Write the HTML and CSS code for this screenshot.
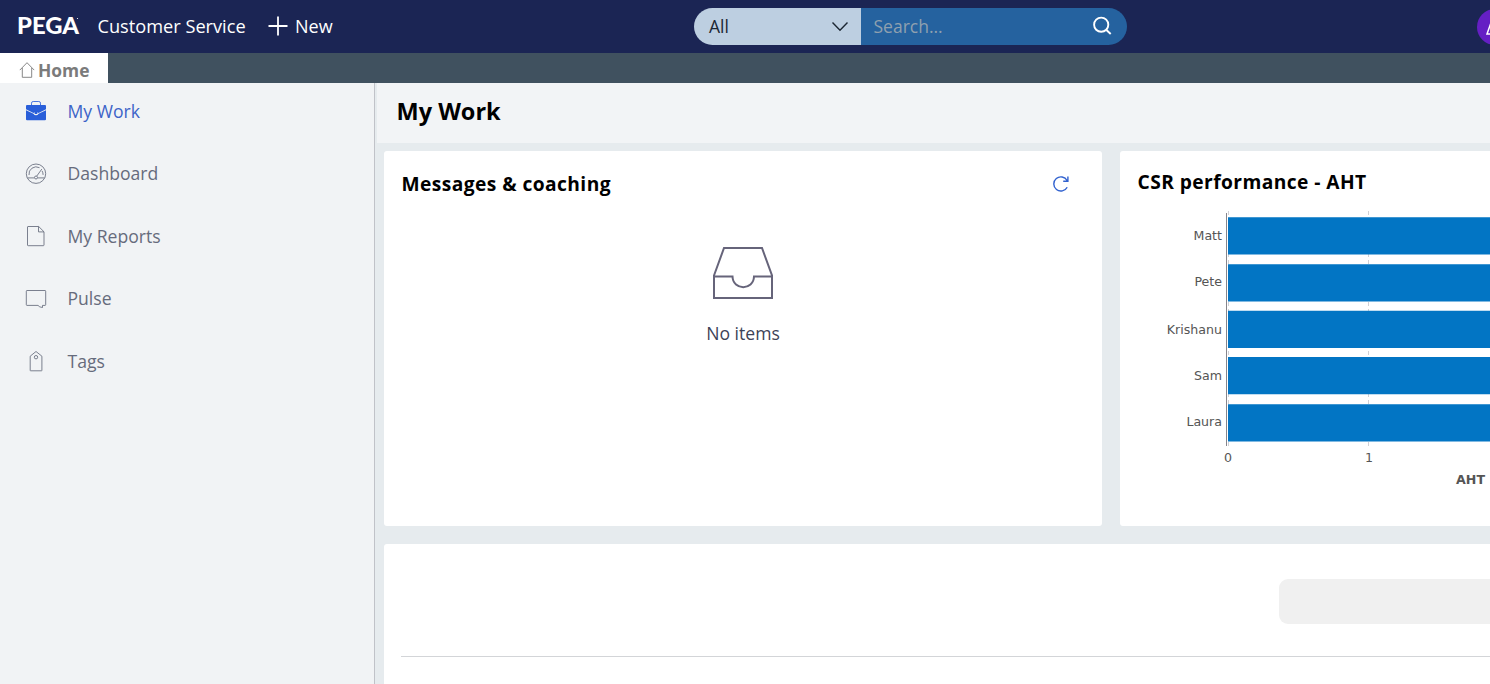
FILE: index.html
```html
<!DOCTYPE html>
<html lang="en">
<head>
<meta charset="utf-8">
<title>My Work</title>
<link rel="stylesheet" href="styles.css">
</head>
<body>
<header class="topbar">
  <svg class="logo" width="64" height="30" viewBox="0 0 64 30"><text x="-1" y="23" textLength="62" lengthAdjust="spacingAndGlyphs">PEGA</text><circle cx="59.500" cy="7.500" r=".6"/></svg>
  <span class="app-name">Customer Service</span>
  <button class="new-btn" type="button">
    <svg width="20" height="20" viewBox="0 0 20 20"><path d="M10 .5v19M.5 10h19"/></svg>
    <span>New</span>
  </button>
  <div class="search">
    <div class="scope"><span>All</span>
      <svg width="18" height="12" viewBox="0 0 18 12"><path d="M1.500 1.500 9 9.300l7.500-7.800"/></svg>
    </div>
    <div class="query"><span>Search...</span>
      <svg width="20" height="20" viewBox="0 0 20 20"><circle cx="9.200" cy="8.700" r="7.100"/><path d="m14.400 14 4.300 4"/></svg>
    </div>
  </div>
  <div class="avatar"><svg width="36" height="36" viewBox="0 0 36 36"><path d="M15 11 10 25h5"/></svg></div>
</header>
<div class="tabs">
  <div class="tab">
    <svg width="16" height="17" viewBox="0 0 16 17"><path d="M.8 8.100 8 .7l7.200 7.400M3.300 6v9.300h9.400V6"/></svg>
    <span>Home</span>
  </div>
</div>
<div class="body">
  <nav class="side">
    <a class="item active"><svg width="22" height="22" viewBox="0 0 22 22"><path class="line" d="M6.500 5V3.200Q6.500 1.500 8.200 1.500h5.600q1.700 0 1.700 1.700V5"/><path class="solid" d="M1 6q0-1 1-1h18q1 0 1 1v3.300l-7.400 3.600Q13 12.200 11 12.200T8.400 12.900L1 9.300zM1 10.200l7.500 3.600q.8 1.500 2.500 1.500t2.500-1.500l7.500-3.600V19.300q0 1-1 1H2q-1 0-1-1z"/><path class="solid" d="M9.700 12h2.600v2H9.700z"/></svg><span>My Work</span></a>
    <a class="item"><svg width="22" height="22" viewBox="0 0 22 22"><circle cx="11" cy="11.700" r="9.700"/><path d="M2.300 15.900h7M12.700 15.900h7M4 13a7.200 7.200 0 0 1 10.500-7.300M17.100 8.900q1 1.800 1 4M11.800 14l5-6.900"/><circle cx="11" cy="15.500" r="1.500"/></svg><span>Dashboard</span></a>
    <a class="item"><svg width="22" height="22" viewBox="0 0 22 22"><path d="M3 1.500h10.700l5.300 5.300V20q0 .7-.7.700H3.200q-.7 0-.7-.7V2q0-.5.500-.5zM13.500 1.500v5.400H19"/></svg><span>My Reports</span></a>
    <a class="item"><svg width="22" height="22" viewBox="0 0 22 22"><path d="M2 3.500h18q.7 0 .7.700v13.500q0 .7-.7.700h-2.500V20.500q-3.200-.2-4.500-2.100H2q-.7 0-.7-.7V4.200Q1.300 3.500 2 3.500z"/></svg><span>Pulse</span></a>
    <a class="item"><svg width="22" height="22" viewBox="0 0 22 22"><path d="M11 1.500 16.900 6.200v14.300q0 .3-.3.300H5.600q-.4 0-.4-.3V6.200z"/><circle cx="11" cy="7.200" r="1.700"/></svg><span>Tags</span></a>
  </nav>
  <main class="main">
    <div class="page-head"><h1>My Work</h1></div>
    <div class="cards">
      <section class="card messages">
        <div class="card-head"><h2>Messages &amp; coaching</h2>
          <svg width="18" height="18" viewBox="0 0 18 18"><path d="M15.200 12.200A7.100 7.100 0 1 1 15.100 5.500M15.900 1.600v4.700h-4.700"/></svg>
        </div>
        <div class="empty">
          <svg width="62" height="54" viewBox="0 0 62 54"><path d="M2 29.500 12 2h38l10 27.500V52H2zM2 30.500h18.500c.5 14.300 21 14.300 21.500 0h18"/></svg>
          <span>No items</span>
        </div>
      </section>
      <section class="card perf">
        <h2>CSR performance - AHT</h2>
        <svg class="chart" width="370" height="290" viewBox="0 0 370 290">
          <path class="grid" d="M248.500 0v235M108.500 0v235"/>
          <path class="axis" d="M106.500 2v233"/>
          <g class="bars"><path d="M108 6.300h262v37.300H108zM108 53.300h262v37.300H108zM108 99.700h262v37.300H108zM108 146h262v37.300H108zM108 193.200h262v37.300H108z"/></g>
          <g class="labels">
            <text x="102" y="29">Matt</text><text x="102" y="75">Pete</text><text x="102" y="123">Krishanu</text><text x="102" y="169">Sam</text><text x="102" y="215">Laura</text>
            <text x="112" y="251">0</text><text x="253" y="251">1</text>
            <text class="title" x="365" y="273">AHT</text>
          </g>
        </svg>
      </section>
    </div>
    <section class="card lower"><div class="field"></div></section>
  </main>
</div>
</body>
</html>
```

FILE: styles.css
```css
* { box-sizing: border-box; }
body { margin: 0; width: 1490px; height: 684px; overflow: hidden; display: flex; flex-direction: column; font: 18px/24px "Open Sans", sans-serif; color: #000; }
svg { display: block; flex: none; fill: none; stroke: currentColor; }
h1, h2 { margin: 0; }

.topbar { height: 53px; flex: none; display: flex; align-items: center; background: #1b2554; color: #fff; padding-left: 18px; overflow: hidden; }
.topbar > * { flex: none; }
.topbar span { margin-top: -2px; }
.logo { fill: #fff; stroke: none; margin-top: -1px; overflow: visible; }
.logo text { font: 900 23px Lato, sans-serif; }
.topbar .app-name { width: 149px; margin-left: 15.500px; white-space: nowrap; font-size: 18.200px; }
.new-btn { display: flex; align-items: center; gap: 7px; width: 66px; margin-left: 21.500px; padding: 0; border: 0; background: none; color: #fff; font: inherit; font-size: 18px; }
.new-btn svg { stroke-width: 1.8; margin-top: -2px; }
.search { display: flex; width: 433px; height: 37px; margin-left: 360px; border-radius: 19px; overflow: hidden; }
.scope { width: 167px; display: flex; align-items: center; justify-content: space-between; padding: 0 12px 0 15px; background: #bdcfe1; color: #1c2733; font-size: 17.500px; }
.scope svg { stroke-width: 1.4; }
.query { flex: 1; display: flex; align-items: center; justify-content: space-between; padding: 0 15px 0 12.500px; background: #25629f; color: #8fa0af; font-size: 17.500px; }
.query svg { color: #fff; stroke-width: 1.9; margin-top: -2px; }
.avatar { width: 36px; height: 36px; margin-left: 350px; border-radius: 50%; background: #651fc4; }
.avatar svg { stroke-width: 1.5; }

.tabs { height: 30px; flex: none; background: #40515f; }
.tab { width: 108px; height: 30px; padding: 4px 0 0 18.500px; display: flex; align-items: center; gap: 3.500px; background: #fff; color: #7b7b7b; font-size: 17.400px; font-weight: 700; }
.tab svg { stroke-width: .9; }

.body { flex: 1; min-height: 0; display: flex; }
.side { width: 375px; flex: none; padding: 15.500px 0 0 25px; display: flex; flex-direction: column; gap: 38.500px; background: #f1f3f5; border-right: 1px solid #c0c2c8; }
.item { display: flex; align-items: center; gap: 20.500px; height: 24px; color: #666b7c; font-size: 17.600px; white-space: nowrap; }
.item svg { stroke-width: .85; }
.item.active { color: #295ed9; }
.item.active span { color: #3d63c8; }
.solid { fill: currentColor; stroke: none; }

.main { flex: 1; min-width: 0; overflow: hidden; padding-left: 2px; background: #e6ebee; }
.page-head { height: 60px; padding: 12px 0 0 19.500px; background: #f2f4f6; }
h1 { font-size: 23.500px; line-height: 32px; font-weight: 700; }
h2 { font-size: 19.200px; line-height: 26px; font-weight: 700; letter-spacing: .43px; white-space: nowrap; }
.cards { display: flex; gap: 18px; padding: 8px 0 18px 7px; }
.card { background: #fff; border-radius: 3px; }
.messages { width: 718px; height: 375px; flex: none; padding: 20px 32px 0 17.500px; }
.card-head { display: flex; align-items: center; justify-content: space-between; }
.card-head svg { color: #3162cf; stroke-width: 1.4; }
.empty { display: flex; flex-direction: column; align-items: center; gap: 21px; margin: 49px -14.500px 0 0; color: #3d4357; font-size: 17.600px; }
.empty svg { color: #66647a; stroke-width: 2; }
.perf { width: 718px; height: 375px; flex: none; padding: 18px 0 0; }
.perf h2 { padding-left: 17.500px; }
.chart { margin-top: 16px; stroke: none; }
.grid { stroke: #d0d0d5; stroke-dasharray: 4 3; }
.axis { stroke: #85858c; }
.bars { fill: #0275c4; }
.labels { fill: #555; font: 12.600px "DejaVu Sans", sans-serif; text-anchor: end; }
.title { font-weight: 700; }
.lower { margin-left: 7px; padding: 35px 0 0 17px; height: 200px; width: 1454px; }
.field { height: 78px; border-bottom: 1px solid #d3d5d8; }
.field::before { content: ""; display: block; margin-left: 878px; height: 45px; border-radius: 9px; background: #f0f0f0; }
```
